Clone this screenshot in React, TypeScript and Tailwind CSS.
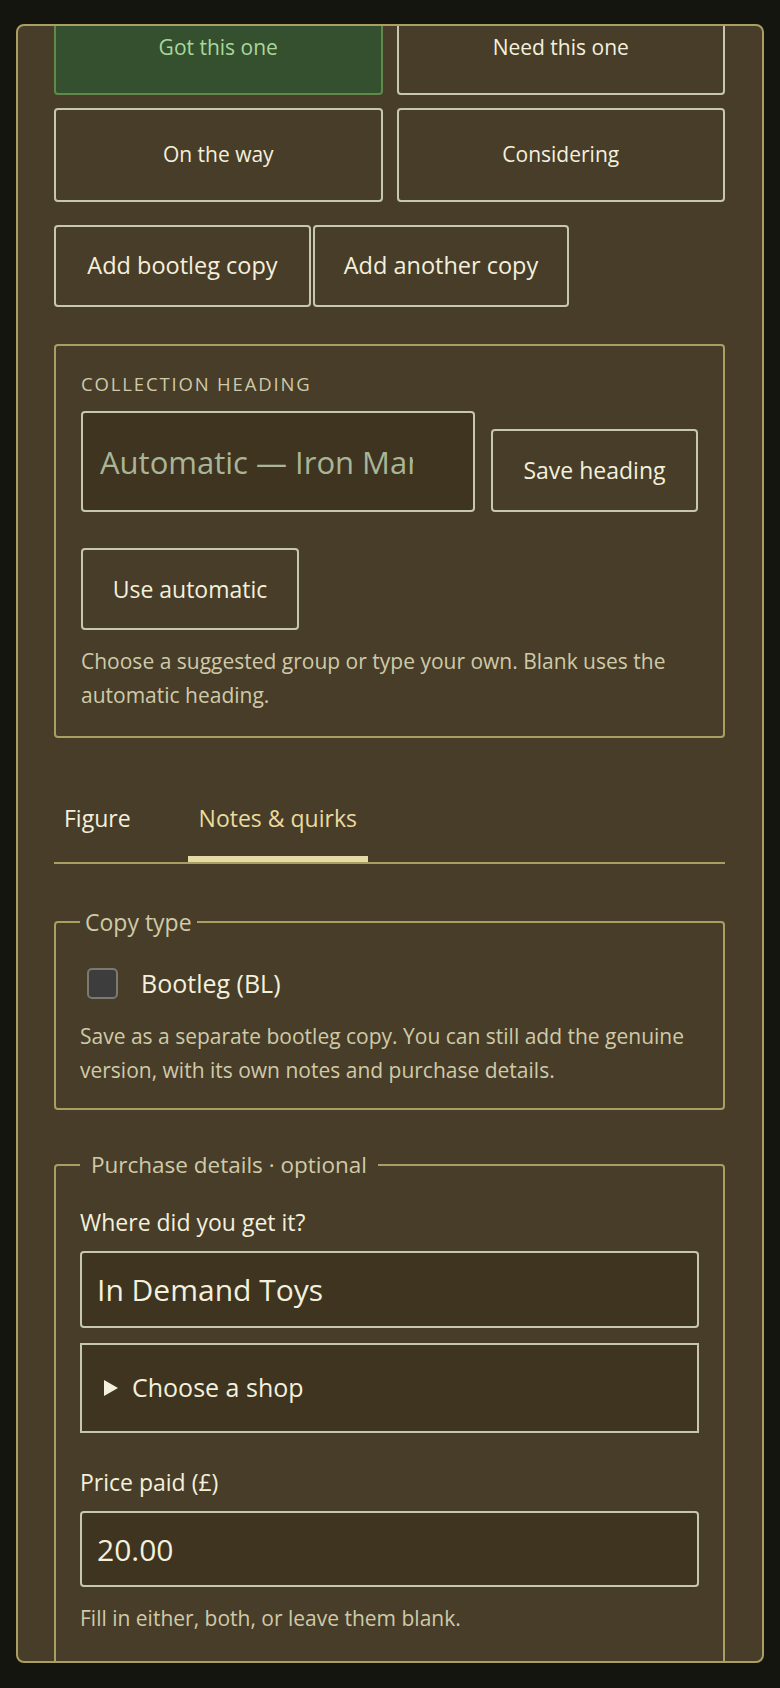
export default function App() {
  const btn =
    "rounded-[4px] border-2 border-[#c5c8ad] bg-[#483d28] text-[#f3f0de] flex items-center justify-center";
  return (
    <div className="min-h-[1688px] bg-[#15150f] pt-[24px] px-[16px] font-['Open_Sans',sans-serif]">
      <div className="h-[1639px] overflow-hidden rounded-[8px] border-2 border-[#a99f63] bg-[#483d28] pl-[36px] pr-[37px]">
        <div className="-mt-[25px]">
          <div className="grid grid-cols-2 gap-x-[14px] gap-y-[13px]">
            <button className="h-[94px] rounded-[4px] border-2 border-[#5f8a4c] bg-[#34502f] text-[21px] text-[#a9d79a]">
              Got this one
            </button>
            <button className={`h-[94px] text-[21px] ${btn}`}>Need this one</button>
            <button className={`h-[94px] text-[21px] ${btn}`}>On the way</button>
            <button className={`h-[94px] text-[21px] ${btn}`}>Considering</button>
          </div>

          <div className="mt-[23px] flex gap-[2px]">
            <button className={`h-[82px] w-[257px] text-[23.5px] ${btn}`}>Add bootleg copy</button>
            <button className={`h-[82px] w-[256px] text-[23.5px] ${btn}`}>Add another copy</button>
          </div>

          <div className="mt-[37px] rounded-[4px] border-2 border-[#a99f63] px-[24px] pt-[26px] pb-[24px]">
            <div className="ml-[1px] text-[18.5px] leading-[24px] tracking-[0.1em] uppercase text-[#cfcaa8]">
              Collection heading
            </div>
            <div className="mt-[15px] flex flex-wrap items-end gap-x-[16px] gap-y-[36px] pl-[1px]">
              <input
                readOnly
                placeholder="Automatic — Iron Man (Marvel Legends)"
                className="h-[101px] w-[394px] rounded-[4px] border-2 border-[#c5c8ad] bg-[#3f3420] pl-[17px] pr-[60px] text-[31px] text-[#f3f0de] placeholder:text-[#a9b597] outline-none"
              />
              <button className={`h-[83px] w-[207px] text-[23px] ${btn}`}>Save heading</button>
              <button className={`h-[82px] w-[218px] text-[23px] ${btn}`}>Use automatic</button>
            </div>
            <p className="mt-[14px] ml-[1px] text-[21px] leading-[34px] text-[#cfcaa8]">
              Choose a suggested group or type your own. Blank uses the automatic heading.
            </p>
          </div>

          <div className="mt-[45px] flex border-b-2 border-[#a99f63]">
            <button className="border-b-[6px] border-transparent px-[10px] pt-[20px] pb-[23px] text-[23px] leading-[30px] text-[#f3f0de]">
              Figure
            </button>
            <button className="ml-[47px] border-b-[6px] border-[#e6dba6] px-[11px] pt-[20px] pb-[23px] text-[23px] leading-[30px] text-[#eadb9f]">
              Notes &amp; quirks
            </button>
          </div>

          <fieldset className="mt-[44px] rounded-[4px] border-2 border-[#a99f63] px-[24px] pb-[21px]">
            <legend className="px-[5px] text-[23px] leading-[28px] text-[#cfcaa8]">Copy type</legend>
            <div className="mt-[30px] flex items-center gap-[23px]">
              <span className="ml-[7px] block h-[31px] w-[31px] rounded-[5px] border-2 border-[#7a7a70] bg-[#3d3d3d]" />
              <span className="text-[25px] leading-[34px] text-[#f3f0de]">Bootleg (BL)</span>
            </div>
            <p className="mt-[19px] text-[21px] leading-[34px] text-[#cfcaa8]">
              Save as a separate bootleg copy. You can still add the genuine version, with its own notes and purchase details.
            </p>
          </fieldset>

          <fieldset className="mt-[41px] rounded-[4px] border-2 border-[#a99f63] px-[24px] pb-[40px]">
            <legend className="px-[11px] text-[22.5px] leading-[28px] text-[#cfcaa8]">
              Purchase details · optional
            </legend>
            <div className="mt-[28px] text-[23px] leading-[30px] text-[#f3f0de]">Where did you get it?</div>
            <input
              readOnly
              value="In Demand Toys"
              className="mt-[14px] block h-[77px] w-full rounded-[4px] border-2 border-[#c5c8ad] bg-[#3f3420] px-[15px] text-[30px] text-[#f3f0de] outline-none"
            />
            <div className="mt-[15px] flex h-[90px] items-center border-2 border-[#c5c8ad] bg-[#3f3420] pl-[22px] text-[25px] text-[#f3f0de]">
              <svg width="14" height="16" viewBox="0 0 14 16" className="mr-[14px]">
                <path d="M0 0 L14 8 L0 16 Z" fill="#f3f0de" />
              </svg>
              Choose a shop
            </div>
            <div className="mt-[34px] text-[23px] leading-[30px] text-[#f3f0de]">Price paid (£)</div>
            <input
              readOnly
              value="20.00"
              className="mt-[14px] block h-[76px] w-full rounded-[4px] border-2 border-[#c5c8ad] bg-[#3f3420] px-[15px] text-[30px] text-[#f3f0de] outline-none"
            />
            <p className="mt-[15px] text-[21px] leading-[32px] text-[#cfcaa8]">Fill in either, both, or leave them blank.</p>
          </fieldset>
        </div>
      </div>
    </div>
  );
}
